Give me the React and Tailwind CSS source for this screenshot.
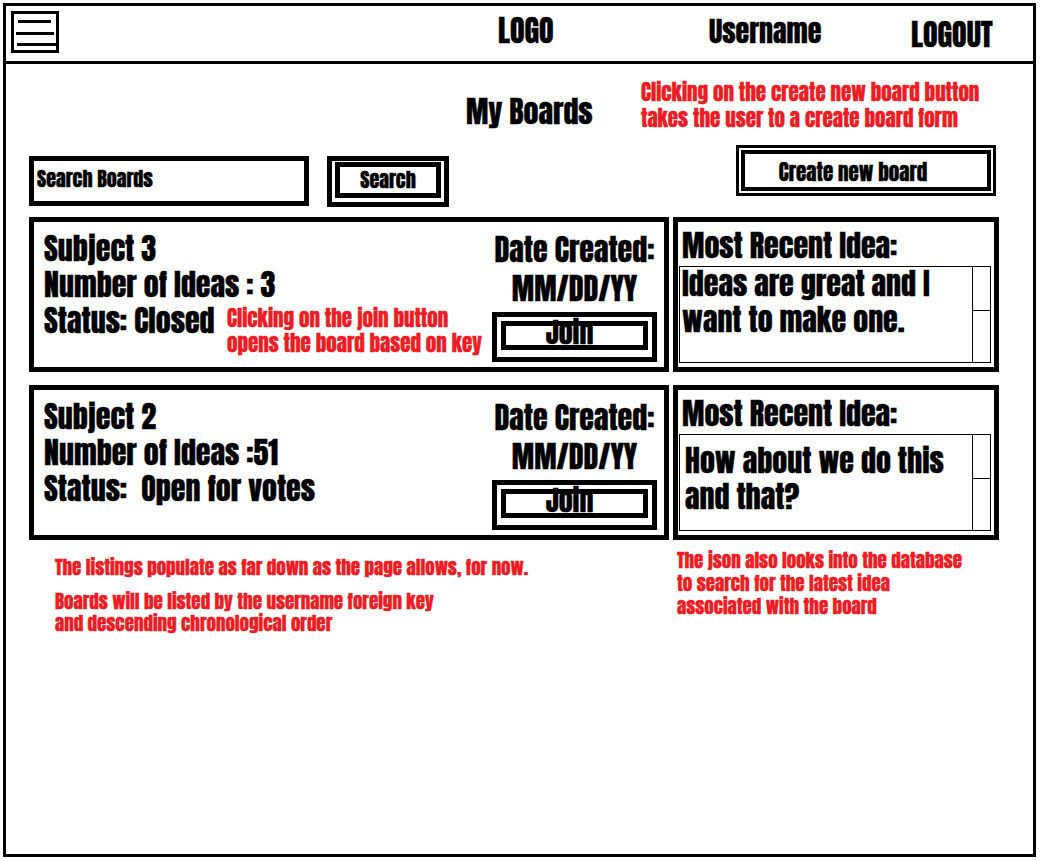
function Hamburger() {
  return (
    <svg width="48" height="42" viewBox="0 0 48 42" className="ml-[5px] mt-[5px] shrink-0">
      <rect x="1.5" y="1.5" width="45" height="39" fill="none" stroke="black" strokeWidth="3" />
      <rect x="7" y="9" width="33" height="3" fill="black" />
      <rect x="5" y="21" width="38" height="3" fill="black" />
      <rect x="6" y="32" width="39" height="3" fill="black" />
    </svg>
  );
}

function BoardCard({ subject, ideas, status, note, idea, ideaOffset }) {
  return (
    <div className="flex gap-[4px]">
      <div className="w-[640px] h-[155px] border-[5px] border-black flex pl-[10px] pr-[7px]">
        <div className="flex-1 min-w-0 pt-[9px] text-[30px] leading-[36px] whitespace-nowrap">
          <div>{subject}</div>
          <div>{ideas}</div>
          <div className="flex items-start">
            <span className="w-[183px] shrink-0">{status}</span>
            {note && (
              <span className="mt-[3px] text-[21px] leading-[25px] text-[#ed1c24]">
                Clicking on the join button
                <br />
                opens the board based on key
              </span>
            )}
          </div>
        </div>
        <div className="w-[165px] shrink-0 pt-[10px] flex flex-col items-center text-[30px] leading-[36px] whitespace-nowrap">
          <div>Date Created:</div>
          <div className="mt-[3px]">MM/DD/YY</div>
          <div className="mt-[5px] w-[165px] h-[50px] border-[5px] border-black px-[4px] pt-[4px] pb-[7px]">
            <div className="h-full border-[5px] border-black flex justify-center pr-[10px]">
              <span className="-mt-[8px] text-[28px] leading-[28px]">Join</span>
            </div>
          </div>
        </div>
      </div>
      <div className="w-[326px] h-[155px] border-[5px] border-black pl-[1px] pt-[6px]">
        <div className="pl-[3px] text-[30px] leading-[36px] whitespace-nowrap">Most Recent Idea:</div>
        <div className="mt-[2px] w-[312px] h-[97px] border border-black flex">
          <div className={"flex-1 min-w-0 text-[30px] leading-[36px] whitespace-nowrap " + (ideaOffset ? "pl-[5px] pt-[8px]" : "pl-[2px] -mt-[1px]")}>
            {idea[0]}
            <br />
            {idea[1]}
          </div>
          <div className="w-[18px] shrink-0 border-l border-black">
            <div className="h-[44px] border-b border-black" />
          </div>
        </div>
      </div>
    </div>
  );
}

export default function App() {
  return (
    <div className="bg-white w-[1040px] h-[861px] p-[3px] font-['Anton',sans-serif] font-normal text-black [-webkit-text-stroke:0.4px_currentColor]">
      <div className="w-[1033px] h-[854px] border-[3px] border-black flex flex-col">
        <header className="h-[58px] border-b-[3px] border-black flex items-start shrink-0">
          <Hamburger />
          <span className="ml-[439px] mt-[9px] w-[211px] text-[30px] leading-[32px]">LOGO</span>
          <span className="mt-[9px] w-[202px] text-[28px] leading-[32px]">Username</span>
          <span className="mt-[13px] text-[30px] leading-[32px]">LOGOUT</span>
        </header>
        <main className="flex flex-col pl-[23px]">
          <div className="h-[81px] flex items-start">
            <div className="ml-[437px] mt-[31px] w-[175px] text-[30px] leading-[34px] whitespace-nowrap">My Boards</div>
            <div className="mt-[15px] text-[21px] leading-[26px] text-[#ed1c24] whitespace-nowrap">
              Clicking on the create new board button
              <br />
              takes the user to a create board form
            </div>
          </div>
          <div className="h-[62px] flex items-start">
            <div className="mt-[11px] w-[280px] h-[50px] border-[5px] border-black pl-[3px] pt-[6px] text-[20px] leading-[24px] whitespace-nowrap">
              Search Boards
            </div>
            <div className="ml-[18px] mt-[11px] w-[122px] h-[51px] border-[5px] border-black px-[3px] pt-[1px] pb-[4px]">
              <div className="h-full border-[5px] border-black flex items-center justify-center text-[20px] leading-[24px]">
                Search
              </div>
            </div>
            <div className="ml-[287px] w-[260px] h-[51px] border-[3px] border-black p-[2px]">
              <div className="h-full border-[4px] border-black flex items-center justify-center pr-[26px] pt-[2px] text-[21px] leading-[26px] whitespace-nowrap">
                Create new board
              </div>
            </div>
          </div>
          <div className="mt-[10px] flex flex-col gap-[13px]">
            <BoardCard
              subject="Subject 3"
              ideas="Number of Ideas : 3"
              status="Status: Closed"
              note
              idea={["Ideas are great and I", "want to make one."]}
            />
            <BoardCard
              subject="Subject 2"
              ideas="Number of Ideas :51"
              status={"Status:\u00a0 Open for votes"}
              idea={["How about we do this", "and that?"]}
              ideaOffset
            />
          </div>
          <div className="flex items-start text-[19px] leading-[22px] text-[#ed1c24] whitespace-nowrap">
            <div className="ml-[26px] w-[622px]">
              <div className="mt-[16px]">The listings populate as far down as the page allows, for now.</div>
              <div className="mt-[12px]">
                Boards will be listed by the username foreign key
                <br />
                and descending chronological order
              </div>
            </div>
            <div className="mt-[9px] leading-[23px]">
              The json also looks into the database
              <br />
              to search for the latest idea
              <br />
              associated with the board
            </div>
          </div>
        </main>
      </div>
    </div>
  );
}
